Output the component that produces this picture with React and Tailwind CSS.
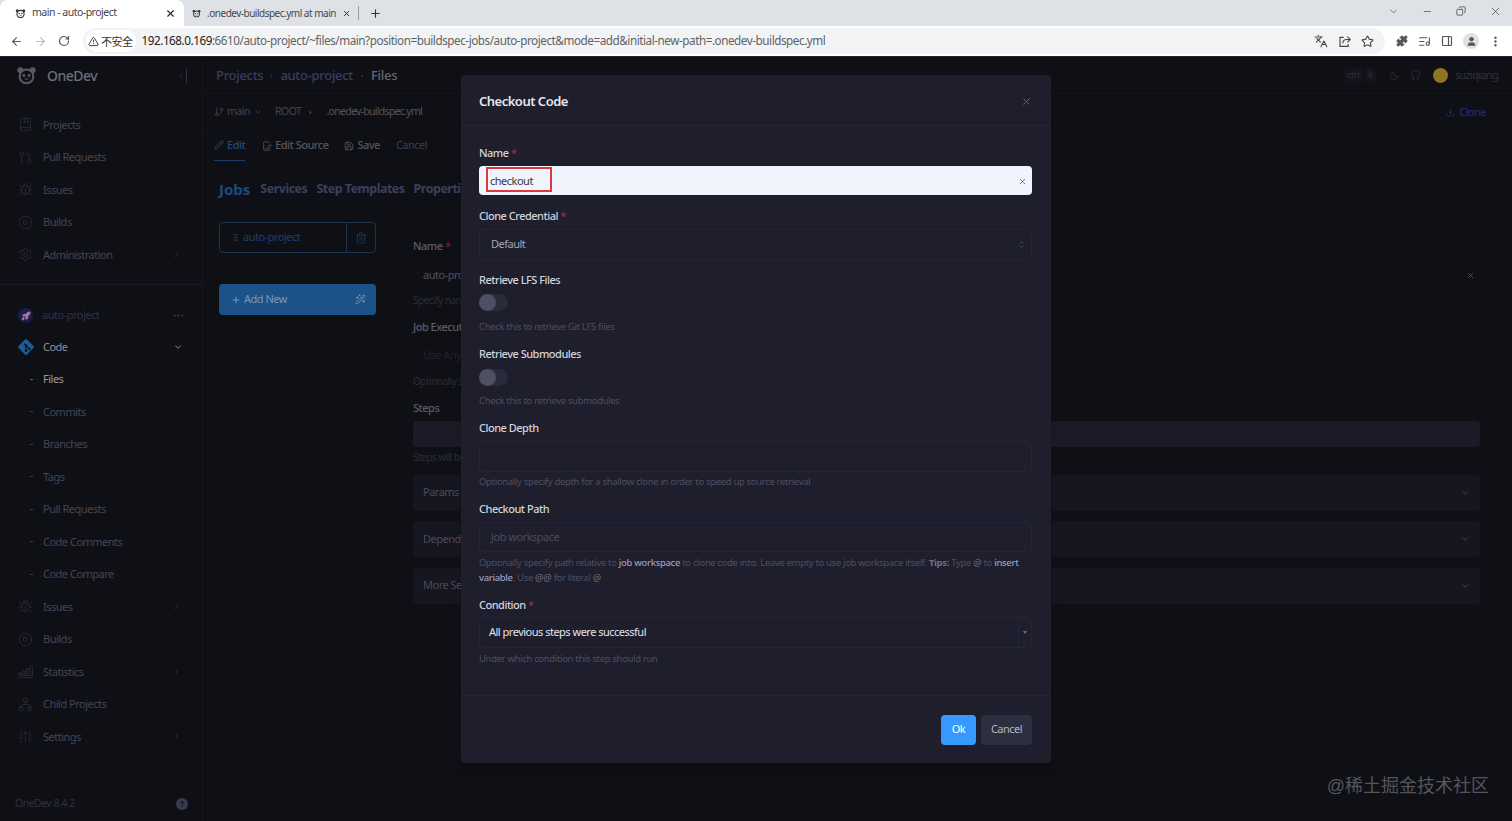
import React from 'react';
import {
  ArrowLeft,
  ArrowRight,
  RotateCw,
  TriangleAlert,
  Languages,
  Star,
  Puzzle,
  ListMusic,
  PanelRight,
  User,
  EllipsisVertical,
  ChevronDown,
  ChevronRight,
  Minus,
  Copy,
  X,
  Plus,
  BookMarked,
  GitPullRequest,
  Bug,
  CirclePlay,
  Settings,
  Rocket,
  Network,
  SlidersVertical,
  GitBranch,
  Pencil,
  FilePenLine,
  Save,
  Trash2,
  GripVertical,
  WandSparkles,
  Download,
  Moon,
  Ellipsis,
  ChevronsUpDown,
} from 'lucide-react';
import { FiGithub } from 'react-icons/fi';

const Panda = ({ className }) => (
  <svg viewBox="0 0 24 24" className={className} fill="none">
    <circle cx="5" cy="6" r="3.4" fill="currentColor" />
    <circle cx="19" cy="6" r="3.4" fill="currentColor" />
    <circle cx="12" cy="13" r="9" fill="currentColor" />
    <circle cx="12" cy="13" r="6.6" fill="var(--panda-bg, #fff)" />
    <circle cx="9" cy="12" r="1.6" fill="currentColor" />
    <circle cx="15" cy="12" r="1.6" fill="currentColor" />
    <path d="M10.5 16h3" stroke="currentColor" strokeWidth="1.4" strokeLinecap="round" />
  </svg>
);

const GitDiamond = ({ className }) => (
  <svg viewBox="0 0 24 24" className={className}>
    <rect x="4" y="4" width="16" height="16" rx="2" fill="#1d5c95" transform="rotate(45 12 12)" />
    <path d="M9.5 7.5l7 7M12 10v7" stroke="#0f1016" strokeWidth="1.6" />
    <circle cx="12" cy="10" r="1.6" fill="#0f1016" />
    <circle cx="12" cy="17" r="1.6" fill="#0f1016" />
    <circle cx="16.5" cy="14.5" r="1.6" fill="#0f1016" />
  </svg>
);

const Bars = ({ className }) => (
  <svg viewBox="0 0 16 16" className={className} fill="none" stroke="currentColor" strokeWidth="0.8">
    <rect x="1" y="9.5" width="2.4" height="3" />
    <rect x="5" y="7.5" width="2.4" height="5" />
    <rect x="9" y="5" width="2.4" height="7.5" />
    <rect x="13" y="2" width="2.4" height="10.5" />
    <path d="M0.5 14.5h15" />
  </svg>
);

const ShareBox = ({ className }) => (
  <svg viewBox="0 0 16 16" className={className} fill="none" stroke="currentColor" strokeWidth="1.4">
    <path d="M7 3H2.5v11h10v-3" />
    <path d="M6 10c0-3 2-4.5 4.5-4.5H15M11.5 2l3.5 3.5L11.5 9" />
  </svg>
);

function BrowserChrome() {
  return (
    <div className="shrink-0 text-[#3c4043]">
      {/* Tabs */}
      <div className="h-[26px] bg-[#dee1e6] flex items-stretch relative">
        <div className="w-[184px] bg-white rounded-t-lg flex items-center pl-[15px] pr-[8px] text-[10.5px] text-[#45474a] [--panda-bg:#fff]">
          <Panda className="w-[11px] h-[11px] text-[#333] mr-[6px]" />
          <span className="flex-1 whitespace-nowrap">main - auto-project</span>
          <X className="w-[11px] h-[11px] text-[#222]" strokeWidth={2.4} />
        </div>
        <div className="w-[175px] flex items-center pl-[8px] pr-[7px] text-[10px] text-[#45474a] border-r border-[#9a9ca0] my-[6px] [--panda-bg:#dee1e6]">
          <Panda className="w-[11px] h-[11px] text-[#333] mr-[6px]" />
          <span className="flex-1 whitespace-nowrap">.onedev-buildspec.yml at main</span>
          <X className="w-[11px] h-[11px] text-[#222] ml-[6px]" strokeWidth={2.4} />
        </div>
        <div className="w-[33px] flex items-center justify-center">
          <Plus className="w-[13px] h-[13px] text-[#333]" />
        </div>
        <div className="ml-auto flex items-center gap-[23px] pr-[10px] pb-[4px] text-[#444]">
          <ChevronDown className="w-[11px] h-[11px]" strokeWidth={1.5} />
          <Minus className="w-[11px] h-[11px]" strokeWidth={1.5} />
          <Copy className="w-[10px] h-[10px] -scale-x-100" strokeWidth={1.8} />
          <X className="w-[13px] h-[13px]" strokeWidth={1.3} />
        </div>
      </div>
      {/* Address bar */}
      <div className="h-[31px] bg-white border-b border-[#222] flex items-center pl-[10px] pr-[10px]">
        <ArrowLeft className="w-[13px] h-[13px] text-[#555]" />
        <ArrowRight className="w-[13px] h-[13px] text-[#bbb] ml-[11px]" />
        <RotateCw className="w-[12px] h-[12px] text-[#555] ml-[11px]" strokeWidth={2.4} />
        <div className="ml-[13px] w-[1302px] h-[26px] rounded-full bg-[#f1f3f4] flex items-center pl-[3px] pr-[11px]">
          <div className="h-[22px] rounded-full bg-white flex items-center pl-[2px] pr-[3px] text-[11px] text-[#333]">
            <TriangleAlert className="w-[11px] h-[11px] mr-[2px] text-[#333]" />
            <span className="font-['Noto_Sans_CJK_SC',sans-serif]">不安全</span>
          </div>
          <div className="ml-[6px] text-[11.7px] tracking-[-0.45px] whitespace-nowrap text-[#5f6368]">
            <span className="text-[#202124]">192.168.0.169</span>
            :6610/auto-project/~files/main?position=buildspec-jobs/auto-project&amp;mode=add&amp;initial-new-path=.onedev-buildspec.yml
          </div>
          <div className="ml-auto flex items-center gap-[10px] text-[#444]">
            <Languages className="w-[14px] h-[14px]" strokeWidth={1.8} />
            <ShareBox className="w-[13px] h-[13px]" />
            <Star className="w-[13px] h-[13px]" strokeWidth={2} />
          </div>
        </div>
        <div className="ml-auto flex items-center gap-[10px] text-[#555]">
          <Puzzle className="w-[12px] h-[12px] fill-[#555]" />
          <ListMusic className="w-[13px] h-[13px]" />
          <PanelRight className="w-[12px] h-[12px]" strokeWidth={2.4} />
          <div className="w-[16px] h-[16px] rounded-full bg-[#dfe1e5] flex items-center justify-center">
            <User className="w-[11px] h-[11px] fill-[#555]" />
          </div>
          <EllipsisVertical className="w-[13px] h-[13px]" strokeWidth={2.4} />
        </div>
      </div>
    </div>
  );
}

const navItemClass = 'h-[32.5px] flex items-center pl-[13px] pr-[21px] text-[11px] text-[#444454]';

function NavItem({ icon: Icon, label, arrow, dash, active }) {
  return (
    <div className={navItemClass}>
      <span className="w-[25px] flex justify-center shrink-0 mr-[5px]">
        {dash ? (
          <span className={`w-[3px] h-px ml-[12px] ${active ? 'bg-[#5a5f86]' : 'bg-[#3a3a48]'}`} />
        ) : (
          Icon && <Icon className="w-[15px] h-[15px] text-[#2e2e3e]" strokeWidth={1.2} />
        )}
      </span>
      <span className={`flex-1 ${active ? 'text-[#9a9aa8]' : ''}`}>{label}</span>
      {arrow && <ChevronRight className="w-[9px] h-[9px] text-[#3a3a48]" />}
    </div>
  );
}

function Sidebar() {
  return (
    <aside className="w-[203px] shrink-0 border-r border-[#14151d] flex flex-col">
      <div className="h-[37px] flex items-center pl-[16px] pr-[15px] [--panda-bg:#0f1016]">
        <Panda className="w-[21px] h-[21px] text-[#5a5a66] mr-[10px]" />
        <span className="flex-1 text-[14px] font-medium text-[#6e6e7a]">OneDev</span>
        <span className="text-[#33333f] flex items-center">
          <ChevronRight className="w-[10px] h-[16px] rotate-180" />
          <span className="w-px h-[14px] bg-[#33333f]" />
        </span>
      </div>
      <div className="pt-[14.5px] pb-[12.5px] border-b border-[#171821]">
        <NavItem icon={BookMarked} label="Projects" />
        <NavItem icon={GitPullRequest} label="Pull Requests" />
        <NavItem icon={Bug} label="Issues" />
        <NavItem icon={CirclePlay} label="Builds" />
        <NavItem icon={Settings} label="Administration" arrow />
      </div>
      <div className="h-[30px] mt-[16px] flex items-center pl-[18px] pr-[17px] text-[11px] text-[#30304a]">
        <span className="w-[15px] h-[15px] rounded-full bg-[#1a1c4a] flex items-center justify-center mr-[9px]">
          <Rocket className="w-[10px] h-[10px] text-[#a37a9a] fill-[#a37a9a]" />
        </span>
        <span className="flex-1">auto-project</span>
        <Ellipsis className="w-[13px] h-[13px] text-[#3a3a48]" />
      </div>
      <div className="h-[32.5px] flex items-center pl-[13px] pr-[19px] text-[11px]">
        <span className="w-[25px] flex justify-center shrink-0 mr-[5px]">
          <GitDiamond className="w-[18px] h-[18px]" />
        </span>
        <span className="flex-1 text-[#8d8d9a]">Code</span>
        <ChevronDown className="w-[10px] h-[10px] text-[#8a8a98]" strokeWidth={2.4} />
      </div>
      <NavItem dash active label="Files" />
      <NavItem dash label="Commits" />
      <NavItem dash label="Branches" />
      <NavItem dash label="Tags" />
      <NavItem dash label="Pull Requests" />
      <NavItem dash label="Code Comments" />
      <NavItem dash label="Code Compare" />
      <NavItem icon={Bug} label="Issues" arrow />
      <NavItem icon={CirclePlay} label="Builds" />
      <NavItem icon={Bars} label="Statistics" arrow />
      <NavItem icon={Network} label="Child Projects" />
      <NavItem icon={SlidersVertical} label="Settings" arrow />
      <div className="mt-auto h-[34px] flex items-center pl-[15px] pr-[14px] text-[10.5px] text-[#2e2e44]">
        <span className="flex-1">OneDev 8.4.2</span>
        <span className="w-[12px] h-[12px] rounded-full bg-[#3a3a4c] text-[#14151d] text-[9px] font-bold flex items-center justify-center">?</span>
      </div>
    </aside>
  );
}

function Collapsible({ label }) {
  return (
    <div className="h-[36px] mt-[10.5px] rounded bg-[#151620] flex items-center pl-[10px] pr-[10px] text-[11px] text-[#4a4a5e]">
      <span className="flex-1">{label}</span>
      <ChevronDown className="w-[10px] h-[10px] text-[#4c4c5a]" strokeWidth={2} />
    </div>
  );
}

function MainContent() {
  return (
    <main className="flex-1 min-w-0 flex flex-col">
      {/* Top bar */}
      <div className="h-[37px] shrink-0 border-b border-[#14151d] flex items-center pl-[13px] pr-[13px] pt-[1px]">
        <span className="text-[13px] tracking-[-0.3px] font-medium text-[#3a3c60]">Projects</span>
        <ChevronRight className="w-[7px] h-[7px] mx-[5px] text-[#34365a]" strokeWidth={3} />
        <span className="text-[13px] tracking-[-0.3px] font-medium text-[#3a3c60]">auto-project</span>
        <span className="w-[2px] h-[2px] mx-[8px] rounded-full bg-[#33333f]" />
        <span className="text-[13px] tracking-[-0.3px] font-medium text-[#66666f]">Files</span>
        <div className="ml-auto flex items-center text-[#2c2c36]">
          <span className="text-[9.5px] px-[3px] bg-[#14151c] rounded-sm">ctrl</span>
          <span className="text-[9.5px] px-[3px] ml-[3px] bg-[#14151c] rounded-sm">k</span>
          <Moon className="w-[10px] h-[10px] ml-[13px]" />
          <FiGithub className="w-[11px] h-[11px] ml-[11px]" />
          <span className="w-[15px] h-[15px] ml-[12px] rounded-full bg-[#8f7422]" />
          <span className="text-[11px] tracking-[-0.7px] ml-[7px] mr-[1px] text-[#2f2f3a]">suziqiang</span>
        </div>
      </div>
      {/* Path row */}
      <div className="h-[36px] shrink-0 border-b border-[#12131b] flex items-center pl-[11px] pr-[26px] pt-[1px] text-[10.5px] text-[#43434f]">
        <GitBranch className="w-[10px] h-[10px] mr-[3px]" />
        <span>main</span>
        <ChevronDown className="w-[8px] h-[8px] ml-[4px]" />
        <span className="ml-[13px]">ROOT</span>
        <ChevronRight className="w-[7px] h-[7px] ml-[6px] fill-[#43434f]" />
        <span className="ml-[12px] tracking-[-0.7px] text-[#55555f]">.onedev-buildspec.yml</span>
        <span className="ml-auto flex items-center text-[11px] text-[#2b2a7a]">
          <Download className="w-[9px] h-[9px] mr-[4px]" />
          Clone
        </span>
      </div>
      {/* Toolbar */}
      <div className="h-[31px] shrink-0 flex items-stretch pl-[11px] text-[11px] text-[#55555f]">
        <span className="flex items-center gap-[3px] border-b border-[#1c3d63] text-[#1e4a7a] font-medium">
          <Pencil className="w-[10px] h-[10px]" />
          Edit
        </span>
        <span className="flex items-center gap-[3px] ml-[17px] font-medium">
          <FilePenLine className="w-[10px] h-[10px]" />
          Edit Source
        </span>
        <span className="flex items-center gap-[3px] ml-[16px] font-medium">
          <Save className="w-[10px] h-[10px]" />
          Save
        </span>
        <span className="flex items-center ml-[16px] text-[#3e3e48]">Cancel</span>
      </div>
      <div className="flex-1 flex min-h-0">
        {/* Jobs column */}
        <div className="w-[194px] shrink-0 pl-[16px] pr-[21px]">
          <div className="h-[56px] mb-[5px] flex items-center whitespace-nowrap font-bold text-[#3c3f5c]">
            <span className="text-[15px] tracking-normal text-[#1c4a80] mr-[10px]">Jobs</span>
            <span className="text-[12.5px] mr-[9px]">Services</span>
            <span className="text-[12.5px] mr-[9px]">Step Templates</span>
            <span className="text-[12.5px]">Properties</span>
          </div>
          <div className="h-[31px] rounded border border-[#1c3250] flex items-stretch text-[11px] text-[#1c3d78]">
            <span className="flex-1 flex items-center pl-[11px]">
              <GripVertical className="w-[9px] h-[9px] mr-[3px] text-[#3c4658]" />
              auto-project
            </span>
            <span className="w-[29px] border-l border-[#1c3250] flex items-center justify-center">
              <Trash2 className="w-[12px] h-[12px] text-[#1c4468]" strokeWidth={1.4} />
            </span>
          </div>
          <div className="h-[31px] mt-[31px] rounded bg-[#1b5288] flex items-center pl-[12px] pr-[10px] text-[11px] text-[#7d97b3]">
            <Plus className="w-[10px] h-[10px] mr-[3px]" strokeWidth={2.4} />
            <span className="flex-1">Add New</span>
            <WandSparkles className="w-[11px] h-[11px]" />
          </div>
        </div>
        {/* Job form */}
        <div className="flex-1 min-w-0 pl-[16px] pr-[32px] pt-[77px] text-[10px] text-[#2c2c38]">
          <div className="h-[16px] text-[11px] font-medium text-[#5c5c68]">
            Name <span className="text-[#6e1d3c]">*</span>
          </div>
          <div className="h-[26px] mt-[8px] pl-[10px] pr-[5px] flex items-center text-[11px] text-[#505060]">
            <span className="flex-1">auto-project</span>
            <X className="w-[9px] h-[9px] text-[#5a5a66]" />
          </div>
          <div className="h-[14px] mt-[5px]">Specify name of the job</div>
          <div className="h-[16px] mt-[12px] text-[11px] font-medium text-[#5c5c68]">Job Executor</div>
          <div className="h-[30px] mt-[5px] pl-[10px] flex items-center text-[11px] text-[#22222c]">Use Any Applicable Executor</div>
          <div className="h-[14px] mt-[4px]">Optionally specify executor</div>
          <div className="h-[16px] mt-[12px] text-[11px] font-medium text-[#5c5c68]">Steps</div>
          <div className="h-[26px] mt-[5px] rounded bg-[#1a1b26]" />
          <div className="h-[14px] mt-[3px]">Steps will be executed serially</div>
          <div className="mt-[5.5px]">
            <Collapsible label="Params & Triggers" />
            <Collapsible label="Dependencies & Services" />
            <Collapsible label="More Settings" />
          </div>
        </div>
      </div>
    </main>
  );
}

function Label({ children, required, className = '' }) {
  return (
    <div className={`h-[16px] leading-[16px] text-[11px] font-medium text-[#d3d3dc] ${className}`}>
      {children}
      {required && <span className="text-[#a0285a]"> *</span>}
    </div>
  );
}

function Hint({ children, className = '' }) {
  return <div className={`text-[9.5px] tracking-[-0.33px] leading-[14.5px] text-[#4e4f60] ${className}`}>{children}</div>;
}

const Toggle = ({ className = '' }) => (
  <div className={`w-[29px] h-[17px] rounded-full bg-[#2a2b3b] ${className}`}>
    <div className="w-[17px] h-[17px] rounded-full bg-[#4e4f63]" />
  </div>
);

const fieldClass = 'rounded border border-[#24253a] flex items-center text-[11px]';

function CheckoutModal() {
  return (
    <div className="absolute left-[461px] top-[18px] w-[590px] h-[688px] rounded bg-[#1e1e2d] flex flex-col shadow-lg">
      <div className="h-[51px] shrink-0 border-b border-[#262736] flex items-center pl-[18px] pr-[19px] pt-[3px]">
        <span className="flex-1 text-[13px] font-semibold text-[#e6e6ee]">Checkout Code</span>
        <X className="w-[11px] h-[11px] text-[#6a6a78]" />
      </div>
      <div className="flex-1 pl-[18px] pr-[19px] pt-[19px]">
        <Label required>Name</Label>
        <div className="relative h-[29px] mt-[5px] pt-[1px] rounded bg-[#eff4fd] flex items-center pl-[11px] pr-[5px] text-[11px] text-[#3a3a44]">
          <span className="flex-1">checkout</span>
          <X className="w-[9px] h-[9px] text-[#555]" />
          <span className="absolute left-[7px] top-[1px] w-[66px] h-[25px] border-2 border-[#e0353b]" />
        </div>
        <Label required className="mt-[13px]">Clone Credential</Label>
        <div className={`${fieldClass} h-[31px] mt-[5px] pl-[11px] pr-[5px] text-[#a5a5b2]`}>
          <span className="flex-1">Default</span>
          <ChevronsUpDown className="w-[9px] h-[9px] text-[#4e4f60]" />
        </div>
        <Label className="mt-[12px]">Retrieve LFS Files</Label>
        <Toggle className="mt-[6px]" />
        <Hint className="mt-[8px] h-[16px] leading-[16px]">Check this to retrieve Git LFS files</Hint>
        <Label className="mt-[11px]">Retrieve Submodules</Label>
        <Toggle className="mt-[7px]" />
        <Hint className="mt-[7px] h-[16px] leading-[16px]">Check this to retrieve submodules</Hint>
        <Label className="mt-[11px]">Clone Depth</Label>
        <div className={`${fieldClass} h-[31px] mt-[5px]`} />
        <Hint className="mt-[2px] h-[16px] leading-[16px]">Optionally specify depth for a shallow clone in order to speed up source retrieval</Hint>
        <Label className="mt-[11px]">Checkout Path</Label>
        <div className={`${fieldClass} h-[30px] mt-[5px] pl-[11px] text-[#4a4b5c]`}>Job workspace</div>
        <Hint className="mt-[4px]">
          Optionally specify path relative to <span className="text-[#9a9dc2] font-medium">job workspace</span> to clone code into. Leave empty to use job workspace itself. <span className="font-bold text-[#6d6e80]">Tips:</span> Type <span className="text-[#6d6e80]">@</span> to <span className="text-[#9a9dc2] font-medium">insert variable</span>. Use <span className="text-[#6d6e80]">@@</span> for literal <span className="text-[#6d6e80]">@</span>
        </Hint>
        <Label required className="mt-[12px]">Condition</Label>
        <div className={`${fieldClass} h-[31px] mt-[4px] pl-[9px] text-[#e4e4ea]`}>
          <span className="flex-1">All previous steps were successful</span>
          <span className="w-[13px] h-full border-l border-[#24253a] flex items-center justify-center">
            <span className="border-x-[2.5px] border-x-transparent border-t-[3px] border-t-[#6d6e80]" />
          </span>
        </div>
        <Hint className="mt-[3px] h-[16px] leading-[16px]">Under which condition this step should run</Hint>
      </div>
      <div className="h-[68px] shrink-0 border-t border-[#262736] flex items-center justify-end gap-[5px] pr-[19px] text-[11px]">
        <button className="w-[35px] h-[30px] rounded bg-[#3699ff] text-white">Ok</button>
        <button className="w-[51px] h-[30px] rounded bg-[#2d2e3f] text-[#b5b5c3]">Cancel</button>
      </div>
    </div>
  );
}

export default function App() {
  return (
    <div className="w-[1512px] h-[821px] overflow-hidden flex flex-col tracking-[-0.5px] font-['Noto_Sans',sans-serif]">
      <BrowserChrome />
      <div className="flex-1 min-h-0 relative flex bg-[#0f1016]">
        <Sidebar />
        <MainContent />
        <CheckoutModal />
        <div className="absolute right-[23px] bottom-[24px] text-[18px] leading-[22px] tracking-normal text-[#55555c] font-['Liberation_Sans','Noto_Sans_CJK_SC',sans-serif]">
          @稀土掘金技术社区
        </div>
      </div>
    </div>
  );
}
